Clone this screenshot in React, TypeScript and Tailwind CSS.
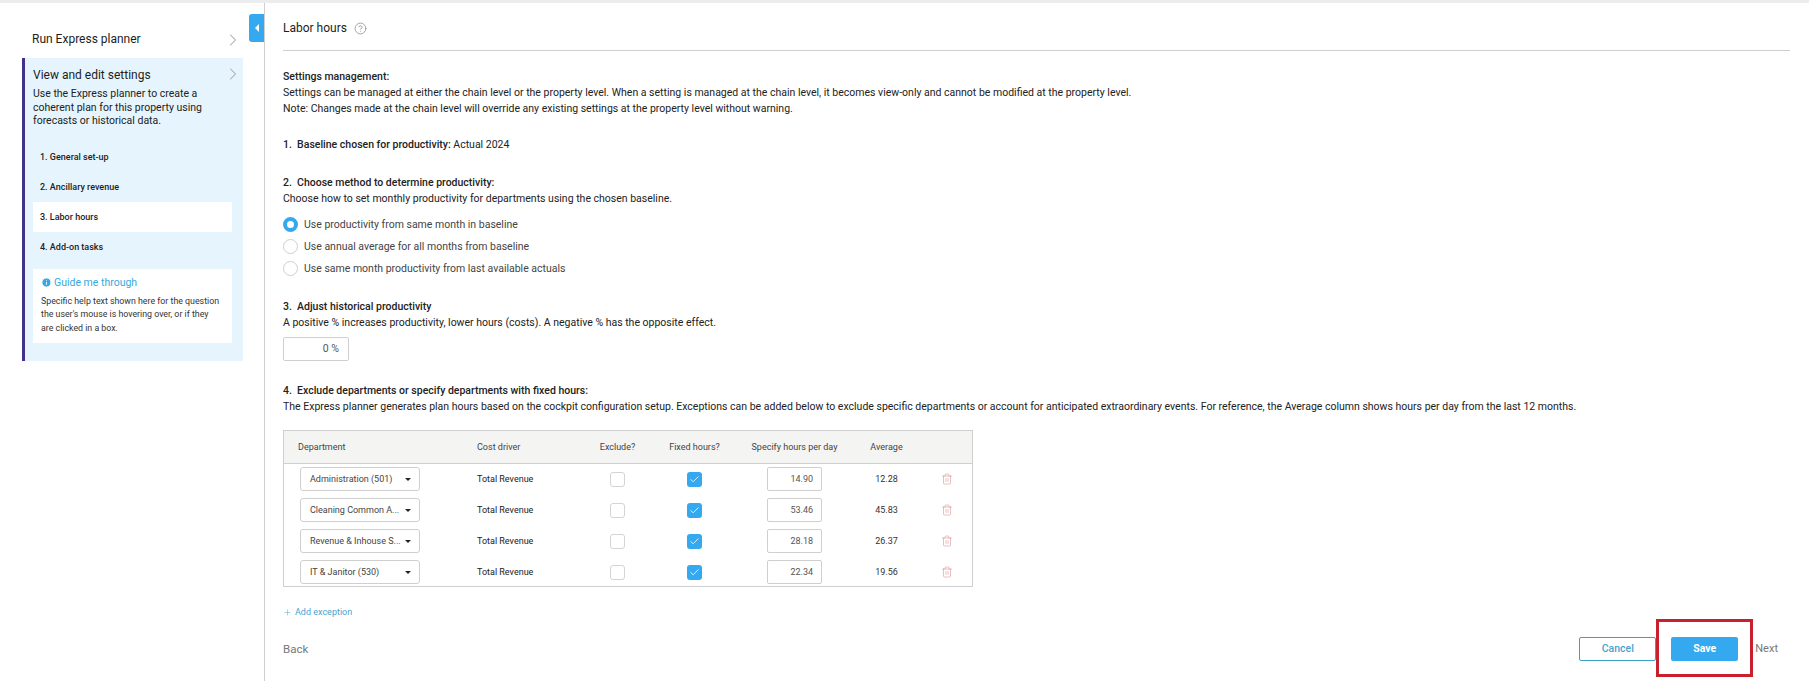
import React from 'react';
import { ChevronRight, Check, Plus, Info, CircleHelp, Trash2 } from 'lucide-react';

const steps = [
  { label: '1. General set-up', active: false },
  { label: '2. Ancillary revenue', active: false },
  { label: '3. Labor hours', active: true },
  { label: '4. Add-on tasks', active: false },
];

const rows = [
  { dept: 'Administration (501)', hours: '14.90', avg: '12.28' },
  { dept: 'Cleaning Common A...', hours: '53.46', avg: '45.83' },
  { dept: 'Revenue & Inhouse S...', hours: '28.18', avg: '26.37' },
  { dept: 'IT & Janitor (530)', hours: '22.34', avg: '19.56' },
];

const radios = [
  'Use productivity from same month in baseline',
  'Use annual average for all months from baseline',
  'Use same month productivity from last available actuals',
];

const App: React.FC = () => {
  return (
    <div className="h-[681px] w-[1809px] overflow-hidden bg-white text-[10.5px] leading-[16px] text-[#222] font-['Roboto',sans-serif]">
      <div className="h-[3px] bg-[#ececec]" />
      <div className="flex h-[678px]">
        {/* Sidebar */}
        <aside className="relative w-[265px] shrink-0 border-r border-[#cfcfcf] pt-[55px]">
          <button className="absolute right-0 top-[11px] flex h-[28px] w-[15px] items-center justify-center rounded-l-[3px] bg-[#35a9f0]">
            <span className="h-0 w-0 border-y-[4px] border-r-[4px] border-y-transparent border-r-white" />
          </button>
          <div className="absolute left-[32px] top-[27px] text-[12px] leading-[18px] text-[#1d1d1d]">
            Run Express planner
          </div>
          <ChevronRight className="absolute left-[223px] top-[27px] h-[20px] w-[20px] text-[#a8a8a8]" strokeWidth={1.25} />

          <div className="relative ml-[22px] h-[303px] w-[221px] border-l-[3px] border-[#41308c] bg-[#e6f5fd] pl-[8px] pr-[11px] pt-[7px]">
            <ChevronRight className="absolute left-[198px] top-[6px] h-[20px] w-[20px] text-[#a8a8a8]" strokeWidth={1.25} />
            <div className="text-[12px] leading-[20px] text-[#1d1d1d]">View and edit settings</div>
            <p className="mt-[2px] w-[190px] text-[10.5px] leading-[13.5px] text-[#222]">
              Use the Express planner to create a coherent plan for this property using forecasts or historical data.
            </p>
            <div className="mt-[14px]">
              {steps.map((s) => (
                <div
                  key={s.label}
                  className={`flex h-[30px] items-center pl-[7px] text-[9px] font-medium text-[#1d1d1d] ${s.active ? 'bg-white' : ''}`}
                >
                  {s.label}
                </div>
              ))}
            </div>
            <div className="mt-[7px] h-[74px] bg-white pl-[8px] pr-[6px] pt-[7px]">
              <div className="flex items-center gap-[2px] text-[10.5px] leading-[14px] text-[#35a9e0]">
                <Info className="h-[11px] w-[11px] fill-[#35a9e0] text-white" strokeWidth={2} />
                Guide me through
              </div>
              <p className="mt-[5px] w-[180px] text-[8.8px] leading-[13.5px] text-[#333]">
                Specific help text shown here for the question the user's mouse is hovering over, or if they are clicked in a box.
              </p>
            </div>
          </div>
        </aside>

        {/* Main */}
        <main className="flex-1 pl-[18px] pr-[19px]">
          <div className="flex h-[48px] items-center gap-[7px] border-b border-[#cfcfcf] pt-[3px]">
            <span className="text-[12px] text-[#1d1d1d]">Labor hours</span>
            <CircleHelp className="h-[13px] w-[13px] text-[#8f8f8f]" strokeWidth={1.5} />
          </div>

          <div className="mt-[18px] font-medium">Settings management:</div>
          <div>Settings can be managed at either the chain level or the property level. When a setting is managed at the chain level, it becomes view-only and cannot be modified at the property level.</div>
          <div>Note: Changes made at the chain level will override any existing settings at the property level without warning.</div>

          <div className="mt-[20px]">
            <span className="font-medium">1.&nbsp; Baseline chosen for productivity:</span> Actual 2024
          </div>

          <div className="mt-[22px] font-medium">2.&nbsp; Choose method to determine productivity:</div>
          <div>Choose how to set monthly productivity for departments using the chosen baseline.</div>
          <div className="mt-[10px] flex flex-col gap-[7px]">
            {radios.map((r, i) => (
              <label key={r} className="flex h-[15px] items-center gap-[6px] text-[#444]">
                <span
                  className={`h-[15px] w-[15px] rounded-full ${i === 0 ? 'border-[4px] border-[#35a9f0] bg-white' : 'border border-[#cfcfcf] bg-white'}`}
                />
                {r}
              </label>
            ))}
          </div>

          <div className="mt-[23px] font-medium">3.&nbsp; Adjust historical productivity</div>
          <div>A positive % increases productivity, lower hours (costs). A negative % has the opposite effect.</div>
          <div className="mt-[6px] flex h-[24px] w-[66px] items-center justify-end rounded-[2px] border border-[#cfcfcf] pr-[9px] text-[#555]">
            0 %
          </div>

          <div className="mt-[22px] font-medium">4.&nbsp; Exclude departments or specify departments with fixed hours:</div>
          <div>
            The Express planner generates plan hours based on the cockpit configuration setup. Exceptions can be added below to exclude specific departments or account for anticipated extraordinary events. For reference, the Average column shows hours per day from the last 12 months.
          </div>

          {/* Table */}
          <div className="mt-[15px] w-[690px] border border-[#cfcfcf] text-[9px]">
            <div className="flex h-[33px] items-center border-b border-[#cfcfcf] bg-[#f4f4f3] text-[#444]">
              <div className="w-[193px] shrink-0 pl-[14px]">Department</div>
              <div className="w-[102px] shrink-0">Cost driver</div>
              <div className="w-[77px] shrink-0 text-center">Exclude?</div>
              <div className="w-[77px] shrink-0 text-center">Fixed hours?</div>
              <div className="w-[123px] shrink-0 text-center">Specify hours per day</div>
              <div className="w-[61px] shrink-0 text-center">Average</div>
            </div>
            <div className="flex flex-col gap-[7px] pb-[2px] pt-[3px]">
              {rows.map((r) => (
                <div key={r.dept} className="flex h-[24px] items-center">
                  <div className="w-[193px] shrink-0 pl-[16px]">
                    <div className="flex h-[24px] w-[120px] items-center justify-between rounded-[3px] border border-[#cfcfcf] pl-[9px] pr-[8px] text-[#444]">
                      <span className="whitespace-nowrap">{r.dept}</span>
                      <span className="h-0 w-0 shrink-0 border-x-[3px] border-t-[3px] border-x-transparent border-t-[#222]" />
                    </div>
                  </div>
                  <div className="w-[102px] shrink-0 text-[#222]">Total Revenue</div>
                  <div className="flex w-[77px] shrink-0 justify-center">
                    <span className="h-[15px] w-[15px] rounded-[3px] border border-[#d4d4d4]" />
                  </div>
                  <div className="flex w-[77px] shrink-0 justify-center">
                    <span className="flex h-[15px] w-[15px] items-center justify-center rounded-[3px] bg-[#35a9f0]">
                      <Check className="h-[11px] w-[11px] text-white" strokeWidth={1.75} />
                    </span>
                  </div>
                  <div className="flex w-[123px] shrink-0 justify-center">
                    <span className="flex h-[24px] w-[55px] items-center justify-end rounded-[2px] border border-[#cfcfcf] pr-[8px] text-[#555]">
                      {r.hours}
                    </span>
                  </div>
                  <div className="w-[61px] shrink-0 text-center text-[#333]">{r.avg}</div>
                  <div className="flex w-[55px] shrink-0 justify-center pl-[5px]">
                    <Trash2 className="h-[12px] w-[12px] text-[#d98a8a]" strokeWidth={1.1} />
                  </div>
                </div>
              ))}
            </div>
          </div>

          <div className="mt-[17px] flex items-center gap-[3px] text-[9px] text-[#4aa3d0]">
            <Plus className="h-[9px] w-[9px]" strokeWidth={1.25} />
            Add exception
          </div>

          {/* Footer */}
          <div className="mt-[17px] flex h-[24px] items-center pr-[12px]">
            <button className="text-[11.5px] text-[#777]">Back</button>
            <button className="ml-auto h-[24px] w-[77px] rounded-[2px] border border-[#3aa0c8] text-[10.5px] font-medium text-[#4aa3d0]">
              Cancel
            </button>
            <div className="relative ml-[15px]">
              <button className="h-[24px] w-[67px] rounded-[2px] bg-[#35a9f0] text-[10.5px] font-bold text-white">
                Save
              </button>
              <span className="absolute left-[-15px] top-[-18px] h-[58px] w-[97px] border-[3px] border-[#c8202c]" />
            </div>
            <button className="ml-[17px] text-[11px] text-[#777]">Next</button>
          </div>
        </main>
      </div>
    </div>
  );
};

export default App;
